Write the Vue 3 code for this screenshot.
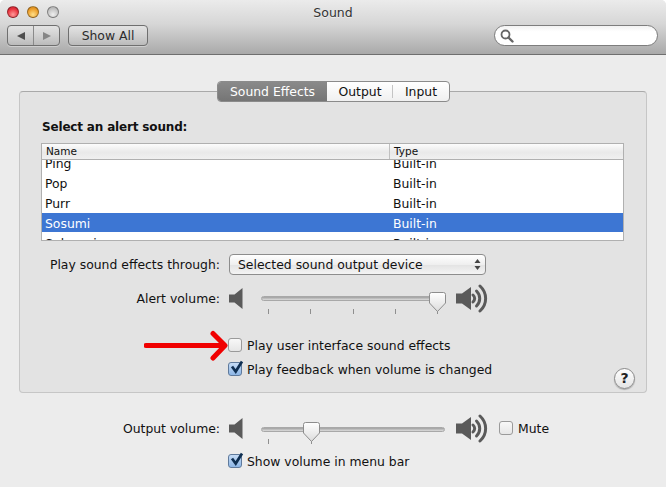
<script setup>
const rows = [
  { name: 'Ping', type: 'Built-in' },
  { name: 'Pop', type: 'Built-in' },
  { name: 'Purr', type: 'Built-in' },
  { name: 'Sosumi', type: 'Built-in', selected: true },
  { name: 'Submarine', type: 'Built-in' },
]
const ticks = [0, 1, 2, 3, 4]
</script>

<template>
  <div class="window">
    <svg width="0" height="0" class="defs">
      <symbol id="spk-lo" viewBox="0 0 14 21">
        <path d="M0 6.500h5.500L13.500 0v21l-8-6.500H0z" fill="#5a5a5a" />
      </symbol>
      <symbol id="spk-hi" viewBox="0 0 32 29">
        <path d="M0 9.500h6L15 3v23l-9-6.500H0z" fill="#5a5a5a" />
        <g fill="none" stroke="#5a5a5a" stroke-width="3" stroke-linecap="round">
          <path d="M17 11c2.200 2 2.200 5 0 7" />
          <path d="M20.500 7c4.300 4.200 4.300 10.800 0 15" />
          <path d="M24 2c7.500 6.800 7.500 18.200 0 25" />
        </g>
      </symbol>
      <symbol id="thumb" viewBox="0 0 17 20">
        <path d="M2.500.5h12a2 2 0 0 1 2 2v8.500L8.500 19.500.5 11V2.500a2 2 0 0 1 2-2z" fill="url(#thumb-fill)" stroke="#8d8d8d" />
      </symbol>
      <symbol id="tick" viewBox="0 0 15 15">
        <path d="M3 6.500l3.700 5L13 1.500" fill="none" stroke="#0f2f52" stroke-width="2.700" />
      </symbol>
      <linearGradient id="thumb-fill" x1="0" y1="0" x2="0" y2="1">
        <stop offset="0" stop-color="#ffffff" />
        <stop offset="1" stop-color="#dcdcdc" />
      </linearGradient>
    </svg>

    <header class="toolbar">
      <div class="titlebar">
        <div class="lights">
          <span class="light red"></span>
          <span class="light amber"></span>
          <span class="light grey"></span>
        </div>
        <div class="title">Sound</div>
      </div>
      <div class="tools">
        <div class="btn nav">
          <span class="nav-half"><i class="tri left"></i></span>
          <span class="nav-half"><i class="tri right"></i></span>
        </div>
        <div class="btn show-all">Show All</div>
        <div class="search">
          <svg width="14" height="14" viewBox="0 0 14 14">
            <circle cx="5.500" cy="5.500" r="4" fill="none" stroke="#666" stroke-width="1.800" />
            <path d="M8.500 8.500l4 4" stroke="#666" stroke-width="2.400" stroke-linecap="round" />
          </svg>
        </div>
      </div>
    </header>

    <main class="content">
      <section class="panel">
        <div class="tabs">
          <span class="tab active">Sound Effects</span>
          <span class="tab output">Output</span>
          <span class="tab input">Input</span>
        </div>

        <h2 class="heading">Select an alert sound:</h2>

        <div class="list">
          <div class="list-head">
            <span class="col-name">Name</span>
            <span class="col-type">Type</span>
          </div>
          <div class="list-body">
            <div v-for="r in rows" :key="r.name" class="row" :class="{ selected: r.selected }">
              <span class="cell-name">{{ r.name }}</span>
              <span class="cell-type">{{ r.type }}</span>
            </div>
          </div>
        </div>

        <div class="form-row through">
          <label class="label">Play sound effects through:</label>
          <div class="select">
            <span>Selected sound output device</span>
            <svg width="7" height="13" viewBox="0 0 7 13">
              <path d="M3.500 1L6.500 5H.5zM3.500 12L.5 8h6z" fill="#444" />
            </svg>
          </div>
        </div>

        <div class="form-row alert">
          <label class="label">Alert volume:</label>
          <svg class="spk-lo"><use href="#spk-lo" /></svg>
          <div class="slider">
            <div class="track"></div>
            <svg class="thumb at-end"><use href="#thumb" /></svg>
            <div class="ticks"><i v-for="t in ticks" :key="t"></i></div>
          </div>
          <svg class="spk-hi"><use href="#spk-hi" /></svg>
        </div>

        <div class="form-row check-ui">
          <span class="label"></span>
          <span class="box"></span>
          <span class="check-text">Play user interface sound effects</span>
        </div>
        <div class="form-row check-fb">
          <span class="label"></span>
          <span class="box on"><svg class="tick"><use href="#tick" /></svg></span>
          <span class="check-text">Play feedback when volume is changed</span>
        </div>

        <div class="help">?</div>
      </section>

      <section class="output-area">
        <div class="form-row out-vol">
          <label class="label">Output volume:</label>
          <svg class="spk-lo"><use href="#spk-lo" /></svg>
          <div class="slider">
            <div class="track"></div>
            <svg class="thumb at-second"><use href="#thumb" /></svg>
            <div class="ticks"><i v-for="t in ticks.slice(0, 2)" :key="t"></i></div>
          </div>
          <svg class="spk-hi"><use href="#spk-hi" /></svg>
          <span class="box mute-box"></span>
          <span class="check-text">Mute</span>
        </div>
        <div class="form-row check-menu">
          <span class="label"></span>
          <span class="box on"><svg class="tick"><use href="#tick" /></svg></span>
          <span class="check-text">Show volume in menu bar</span>
        </div>
      </section>
    </main>

    <svg class="arrow" width="90" height="32" viewBox="0 0 90 32">
      <path d="M2 15.500h75" stroke="#f00000" stroke-width="5" stroke-linecap="round" />
      <path d="M69 3.500L81 15.500 69 28" fill="none" stroke="#f00000" stroke-width="5" stroke-linecap="round" stroke-linejoin="round" />
    </svg>
  </div>
</template>

<style>
html, body { margin: 0; background: #ffffff; }
</style>

<style scoped>
.window {
  position: relative;
  width: 666px;
  height: 487px;
  overflow: hidden;
  background: #ececec;
  border-radius: 5px 5px 0 0;
  font-family: "DejaVu Sans", "Liberation Sans", sans-serif;
  font-size: 12.4px;
  color: #111;
}
.defs { position: absolute; }

.toolbar {
  height: 55px;
  box-sizing: border-box;
  border-bottom: 1px solid #6f6f6f;
  background: linear-gradient(#ebebeb, #d6d6d6 45%, #a9a9a9);
}
.titlebar {
  height: 25px;
  display: grid;
  grid-template-columns: 1fr auto 1fr;
  align-items: center;
}
.lights {
  display: flex;
  gap: 8px;
  padding-left: 7px;
  margin-top: -1px;
}
.light {
  width: 12px;
  height: 12px;
  border-radius: 50%;
  box-sizing: border-box;
  border: 1px solid rgba(0, 0, 0, 0.35);
}
.red { background: radial-gradient(circle at 50% 75%, #ff9a9a, #ea3540 60%, #b81c28); }
.amber { background: radial-gradient(circle at 50% 75%, #ffe08a, #eda02c 60%, #c67c14); }
.grey { background: radial-gradient(circle at 50% 75%, #efefef, #c4c4c4 60%, #a2a2a2); }
.title {
  font-size: 12.5px;
  color: #333;
  text-shadow: 0 1px 0 rgba(255, 255, 255, 0.5);
  margin-top: -1px;
}
.tools {
  display: flex;
  padding: 0 8px 0 7px;
}
.btn {
  height: 21px;
  box-sizing: border-box;
  border: 1px solid #6f6f6f;
  border-radius: 4px;
  background: linear-gradient(rgba(255, 255, 255, 0.35), rgba(255, 255, 255, 0.05));
  box-shadow: 0 1px 0 rgba(255, 255, 255, 0.35);
}
.nav {
  width: 53px;
  display: flex;
}
.nav-half {
  flex: 1;
  display: flex;
  align-items: center;
  justify-content: center;
}
.nav-half:first-child { border-right: 1px solid #8a8a8a; }
.tri {
  display: block;
  width: 0;
  height: 0;
  border-top: 4.500px solid transparent;
  border-bottom: 4.500px solid transparent;
}
.tri.left { border-right: 8px solid #4e4e4e; }
.tri.right { border-left: 8px solid #868686; }
.show-all {
  width: 80px;
  margin-left: 8px;
  text-align: center;
  line-height: 19px;
  color: #2c2c2c;
}
.search {
  width: 164px;
  height: 21px;
  margin-left: auto;
  box-sizing: border-box;
  border: 1px solid #7d7d7d;
  border-radius: 11px;
  background: linear-gradient(#f2f2f2, #ffffff 30%);
  display: flex;
  align-items: center;
  padding-left: 5px;
}

.content {
  padding: 36px 19px 0;
}
.panel {
  position: relative;
  width: 628px;
  height: 302px;
  box-sizing: border-box;
  border: 1px solid #c6c6c6;
  border-top-color: #a9a9a9;
  border-radius: 4px;
  background: #e3e3e3;
  padding: 0 21px 0 22px;
}
.tabs {
  display: flex;
  width: 233px;
  height: 21px;
  margin: -11px auto 0;
  box-sizing: border-box;
  border: 1px solid #8b8b8b;
  border-radius: 4px;
  background: linear-gradient(#ffffff, #f0f0f0);
  line-height: 19px;
  text-align: center;
  overflow: hidden;
}
.tab { display: block; }
.active {
  width: 109px;
  background: linear-gradient(#8a8a8a, #757575);
  color: #fff;
}
.output {
  width: 66px;
  position: relative;
}
.output::after {
  content: "";
  position: absolute;
  right: 0;
  top: 3px;
  bottom: 3px;
  width: 1px;
  background: #c4c4c4;
}
.input { flex: 1; }

.heading {
  margin: 17px 0 0;
  font-size: 12px;
  letter-spacing: -0.17px;
  line-height: 16px;
  font-weight: 700;
  color: #111;
}

.list {
  margin: 8px 0 0 -1px;
  width: 583px;
  height: 98px;
  box-sizing: border-box;
  border: 1px solid #b0b0b0;
  background: #fff;
  overflow: hidden;
}
.list-head {
  height: 16px;
  box-sizing: border-box;
  border-bottom: 1px solid #b0b0b0;
  background: linear-gradient(#fcfcfc, #e9e9e9 55%, #f0f0f0);
  display: flex;
  font-size: 10.500px;
  line-height: 15px;
}
.col-name {
  width: 348px;
  padding-left: 4px;
  box-sizing: border-box;
  border-right: 1px solid #c0c0c0;
}
.col-type { padding-left: 4px; }
.list-body {
  height: 80px;
  overflow: hidden;
}
.row {
  height: 20px;
  display: flex;
  line-height: 21px;
}
.row:first-child { margin-top: -7px; }
.selected {
  background: linear-gradient(#3d76d3 95%, #fff 95%);
  color: #fff;
}
.cell-name {
  width: 351px;
  padding-left: 3px;
  box-sizing: border-box;
}

.form-row {
  display: flex;
  align-items: center;
}
.label {
  flex: none;
  width: 178px;
  margin-left: -22px;
  padding-left: 22px;
  box-sizing: content-box;
  text-align: right;
}
.through { margin-top: 12px; height: 22px; }
.select {
  width: 257px;
  height: 21px;
  margin-left: 9px;
  box-sizing: border-box;
  border: 1px solid #8d8d8d;
  border-radius: 4px;
  background: linear-gradient(#ffffff, #efefef 50%, #e4e4e4 55%, #f4f4f4);
  display: flex;
  align-items: center;
  justify-content: space-between;
  padding: 0 4px 0 8px;
}
.alert { margin-top: 8px; height: 30px; }
.spk-lo {
  width: 14px;
  height: 21px;
  margin-left: 9px;
  flex: none;
}
.spk-hi {
  width: 32px;
  height: 29px;
  margin-left: 11px;
  flex: none;
}
.slider {
  position: relative;
  width: 184px;
  height: 30px;
  margin-left: 18px;
  flex: none;
}
.track {
  height: 5px;
  margin-top: 13px;
  border-radius: 3px;
  box-sizing: border-box;
  border: 1px solid #a8a8a8;
  background: linear-gradient(#9f9f9f, #dcdcdc);
}
.out-vol .track { margin-top: 14px; }
.out-vol .ticks { margin-top: 7px; }
.thumb {
  position: absolute;
  top: 9px;
  width: 17px;
  height: 20px;
}
.at-end { left: 168px; }
.at-second { left: 42px; }
.ticks {
  display: flex;
  margin-top: 8px;
  padding: 0 7px;
  gap: 41.500px;
}
.ticks i {
  display: block;
  width: 1px;
  height: 5px;
  background: #8f8f8f;
}

.box {
  position: relative;
  flex: none;
  width: 14px;
  height: 14px;
  box-sizing: border-box;
  margin-left: 8px;
  border: 1px solid #9a9a9a;
  border-radius: 3px;
  background: linear-gradient(#f8f8f8, #e6e6e6);
}
.box.on {
  border-color: #5f7a9c;
  background: linear-gradient(#c6dcf6, #8db6e6);
}
.tick {
  position: absolute;
  left: -0.500px;
  top: -3px;
  width: 15px;
  height: 15px;
}
.check-text { margin-left: 5px; white-space: nowrap; }
.check-ui { margin-top: 22px; height: 20px; }
.check-fb { margin-top: 4px; height: 20px; }

.help {
  position: absolute;
  right: 11px;
  bottom: 3px;
  width: 21px;
  height: 21px;
  box-sizing: border-box;
  border: 1px solid #8a8a8a;
  border-radius: 50%;
  background: linear-gradient(#ffffff, #e4e4e4);
  box-shadow: 0 1px 1px rgba(0, 0, 0, 0.25);
  text-align: center;
  font-weight: 700;
  font-size: 14px;
  line-height: 19px;
  color: #222;
}

.output-area {
  padding: 20px 0 0 23px;
}
.out-vol { height: 30px; }
.mute-box { margin-left: 11px; }
.check-menu { margin-top: 8px; height: 20px; }

.arrow {
  position: absolute;
  left: 144px;
  top: 330px;
  pointer-events: none;
}
</style>
